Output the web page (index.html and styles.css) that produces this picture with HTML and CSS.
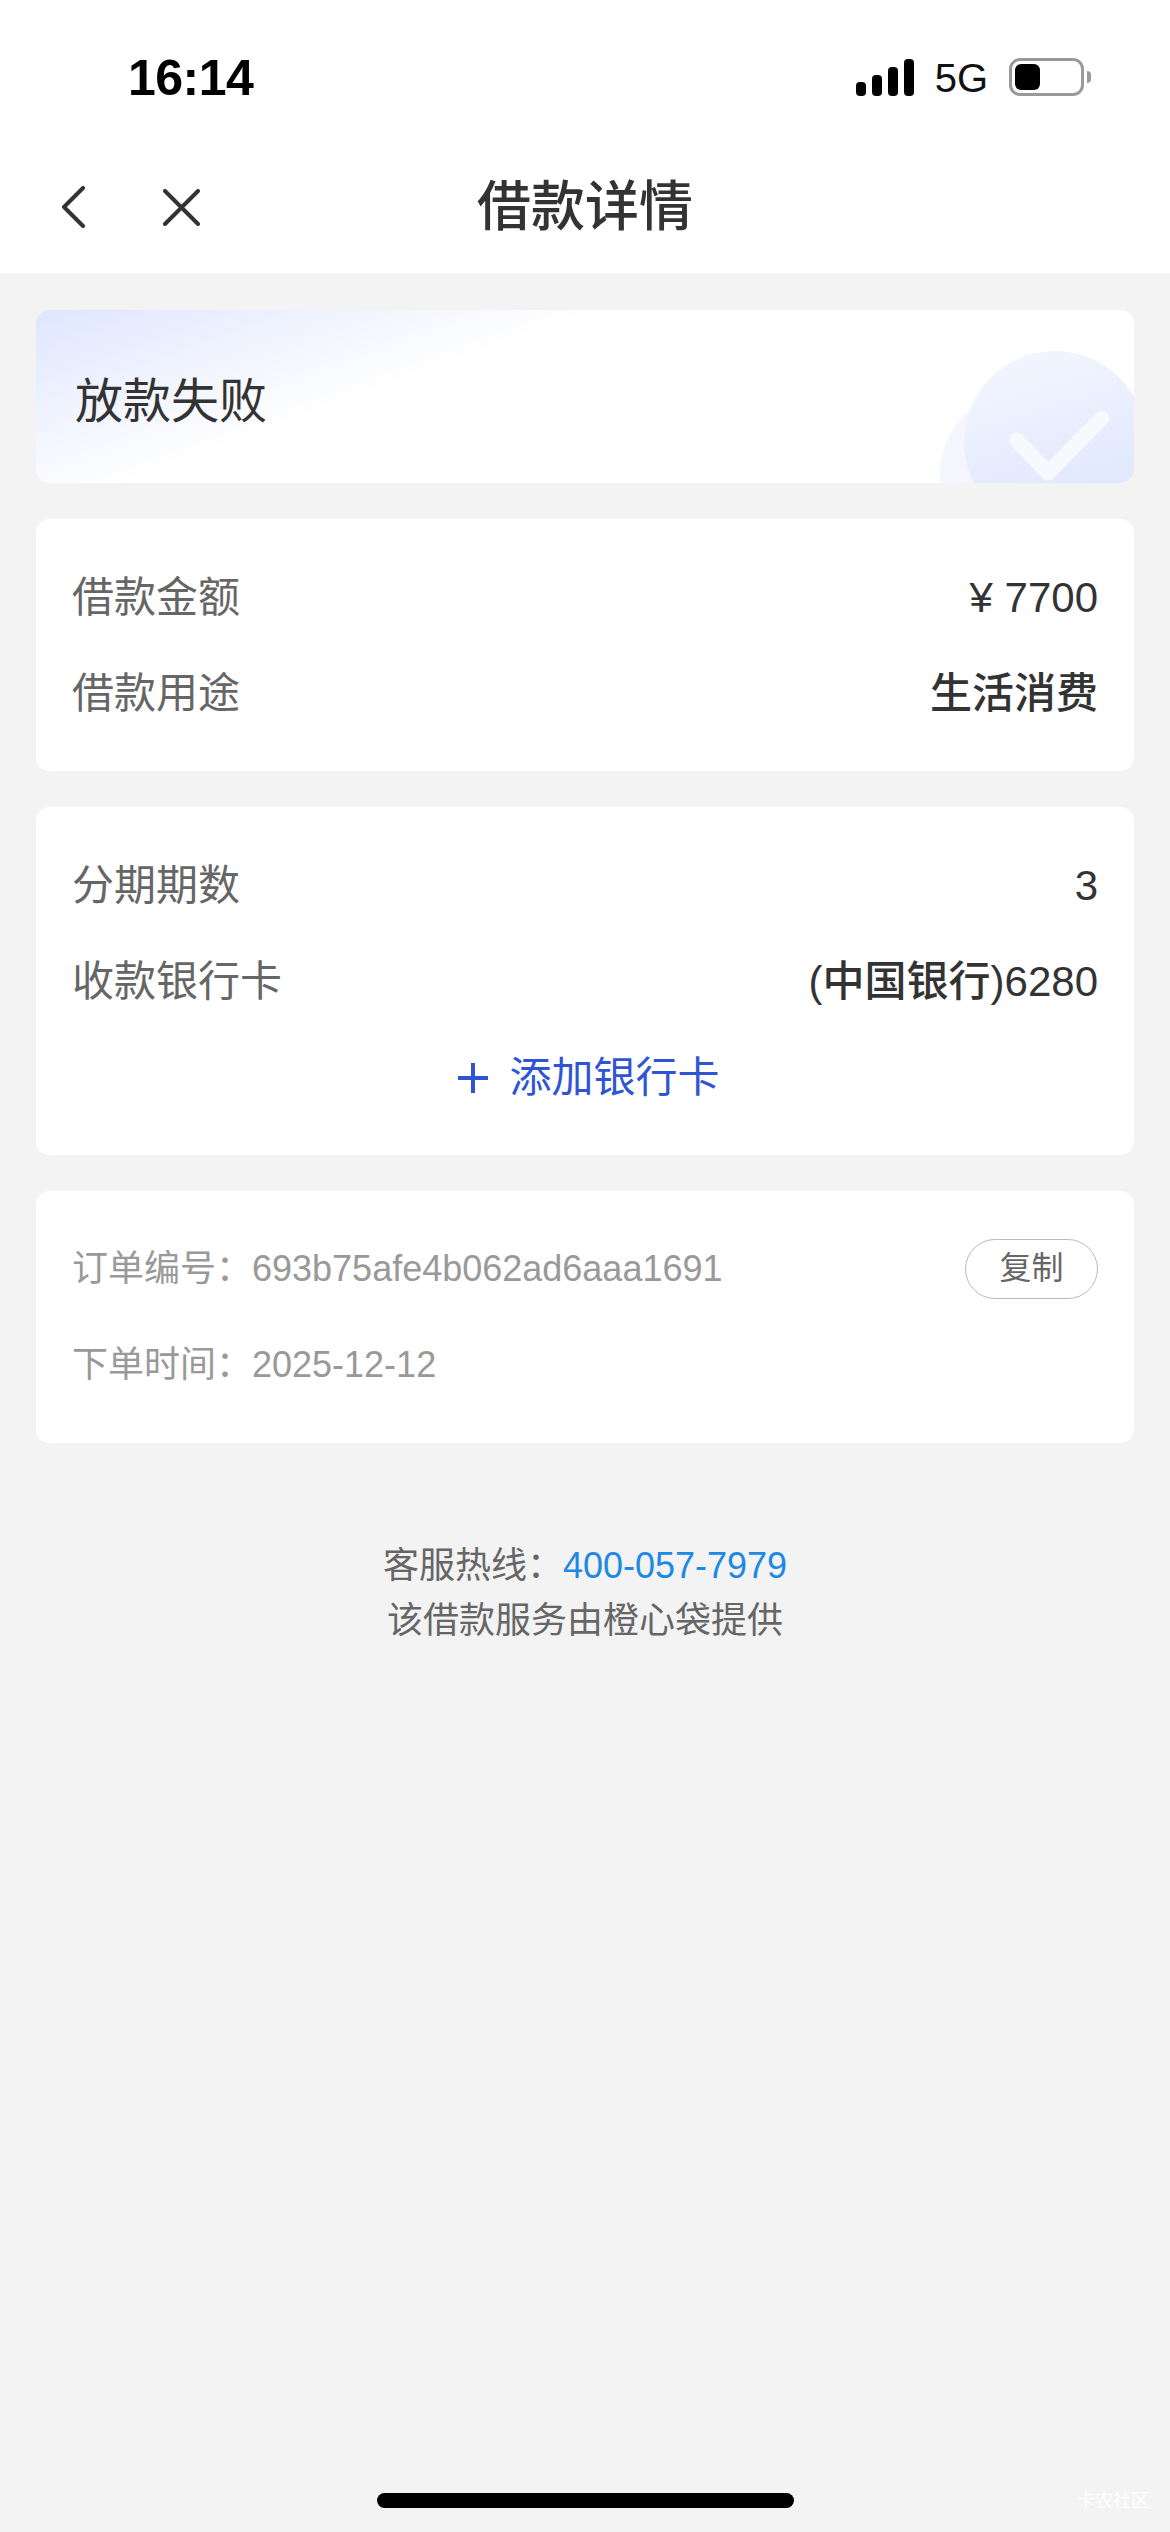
FILE: index.html
```html
<!DOCTYPE html>
<html lang="zh-CN">
<head>
    <meta charset="UTF-8">
    <link rel="stylesheet" href="styles.css">
    <title>借款详情</title>
</head>
<body>
<div id="page">
    <div class="top">
        <div class="status">
            <span class="time">16:14</span>
            <div class="status-right">
                <div class="signal">
                    <i class="bar1"></i><i class="bar2"></i><i class="bar3"></i><i class="bar4"></i>
                </div>
                <span class="net">5G</span>
                <div class="battery"><i></i></div>
                <div class="battery-tip"></div>
            </div>
        </div>
        <div class="nav">
            <svg class="nav-back" width="24" height="42" viewBox="0 0 24 42">
                <path d="M22 2 L3 21 L22 40" fill="none" stroke="#333" stroke-width="4" stroke-linecap="round" stroke-linejoin="round"/>
            </svg>
            <svg class="nav-close" width="37" height="37" viewBox="0 0 37 37">
                <path d="M2 2 L35 35 M35 2 L2 35" fill="none" stroke="#333" stroke-width="4" stroke-linecap="round"/>
            </svg>
            <h1>借款详情</h1>
        </div>
    </div>

    <div class="content">
        <div class="card state">
            <h2>放款失败</h2>
            <svg class="state-icon" width="195" height="132" viewBox="0 0 195 132">
                <defs>
                    <linearGradient id="ball" x1="0.3" y1="0" x2="0.6" y2="1">
                        <stop offset="0" stop-color="#f3f6ff"/>
                        <stop offset="1" stop-color="#dde5fd"/>
                    </linearGradient>
                </defs>
                <circle cx="86" cy="124" r="85" fill="#f4f6fe"/>
                <circle cx="116" cy="91" r="91" fill="url(#ball)"/>
                <path d="M78 89 L109 122 L163 67" fill="none" stroke="#f8f9ff" stroke-width="15" stroke-linecap="round" stroke-linejoin="round"/>
            </svg>
        </div>

        <div class="card">
            <div class="row"><span class="label">借款金额</span><span class="val">¥ 7700</span></div>
            <div class="row"><span class="label">借款用途</span><span class="val strong">生活消费</span></div>
        </div>

        <div class="card">
            <div class="row"><span class="label">分期期数</span><span class="val">3</span></div>
            <div class="row"><span class="label">收款银行卡</span><span class="val"><b>(中国银行)</b>6280</span></div>
            <div class="row add-card">
                <svg width="32" height="32" viewBox="0 0 32 32">
                    <path d="M16 1 V31 M1 16 H31" stroke="#2f55d4" stroke-width="4"/>
                </svg>
                <span>添加银行卡</span>
            </div>
        </div>

        <div class="card order">
            <div class="row small">
                <span>订单编号：693b75afe4b062ad6aaa1691</span>
                <span class="copy">复制</span>
            </div>
            <div class="row small"><span>下单时间：2025-12-12</span></div>
        </div>

        <div class="foot">
            <p>客服热线：<span class="phone">400-057-7979</span></p>
            <p>该借款服务由橙心袋提供</p>
        </div>
    </div>

    <div class="home-bar"></div>
    <div class="mark">卡农社区</div>
</div>
</body>
</html>
```

FILE: styles.css
```css
* {
    box-sizing: border-box;
}
body {
    margin: 0;
    font-family: "Liberation Sans", "Noto Sans CJK SC", sans-serif;
    color: #333;
}
h1, h2, p {
    margin: 0;
    font-weight: normal;
}
#page {
    position: relative;
    width: 1170px;
    height: 2532px;
    background-color: #f3f3f3;
    overflow: hidden;
}
.top {
    height: 273px;
    background-color: #fff;
}
.status {
    height: 148px;
    padding: 48px 79px 0 128px;
    display: flex;
    justify-content: space-between;
    align-items: flex-start;
}
.time {
    font-size: 50px;
    line-height: 60px;
    font-weight: bold;
    letter-spacing: -0.5px;
    color: #000;
}
.status-right {
    display: flex;
    align-items: flex-start;
    padding-top: 10px;
}
.signal {
    display: flex;
    align-items: flex-end;
    gap: 6px;
    height: 37px;
    margin-top: 1px;
}
.signal i {
    display: block;
    width: 10px;
    background-color: #000;
    border-radius: 4px;
}
.bar1 { height: 14px; }
.bar2 { height: 21px; }
.bar3 { height: 29px; }
.bar4 { height: 37px; }
.net {
    font-size: 40px;
    line-height: 40px;
    margin-left: 21px;
    color: #111;
}
.battery {
    width: 75px;
    height: 38px;
    margin-left: 21px;
    border: 3px solid #999;
    border-radius: 11px;
    padding: 3px;
}
.battery i {
    display: block;
    width: 25px;
    height: 26px;
    background-color: #000;
    border-radius: 6px;
}
.battery-tip {
    width: 4px;
    height: 12px;
    margin: 13px 0 0 3px;
    background-color: #999;
    border-radius: 0 6px 6px 0;
}
.nav {
    position: relative;
    height: 118px;
    display: flex;
    align-items: center;
    padding-left: 61px;
}
.nav-close {
    margin-left: 78px;
}
.nav h1 {
    position: absolute;
    left: 0;
    right: 0;
    text-align: center;
    font-size: 54px;
    line-height: 76px;
    font-weight: 500;
}
.content {
    padding: 37px 36px 0;
    display: flex;
    flex-direction: column;
    gap: 36px;
}
.card {
    background-color: #fff;
    border-radius: 14px;
    padding: 31px 36px 29px;
}
.order {
    padding: 30px 36px;
}
.state {
    position: relative;
    height: 173px;
    padding: 10px 39px 0;
    display: flex;
    align-items: center;
    background-image: linear-gradient(160deg, #dfe6fe 0, #fff 36%);
    overflow: hidden;
}
.state h2 {
    font-size: 48px;
    line-height: 68px;
    color: #333;
}
.state-icon {
    position: absolute;
    right: 0;
    bottom: 0;
}
.row {
    display: flex;
    justify-content: space-between;
    align-items: center;
    height: 96px;
    font-size: 42px;
    line-height: 60px;
}
.label {
    color: #666;
}
.val {
    color: #333;
}
.val b, .strong {
    font-weight: 500;
}
.add-card {
    justify-content: center;
    gap: 20px;
    padding-left: 7px;
    color: #2f55d4;
}
.small {
    font-size: 36px;
    color: #999;
}
.copy {
    width: 133px;
    height: 60px;
    line-height: 56px;
    text-align: center;
    border: 1px solid #bbb;
    border-radius: 30px;
    font-size: 32px;
    color: #666;
}
.foot {
    margin-top: 59px;
    text-align: center;
    font-size: 36px;
    line-height: 55px;
    color: #666;
}
.phone {
    color: #1e88e5;
}
.home-bar {
    position: absolute;
    left: 377px;
    bottom: 24px;
    width: 417px;
    height: 15px;
    background-color: #000;
    border-radius: 8px;
}
.mark {
    position: absolute;
    right: 21px;
    bottom: 20px;
    font-size: 18px;
    line-height: 22px;
    color: #fff;
}
```
